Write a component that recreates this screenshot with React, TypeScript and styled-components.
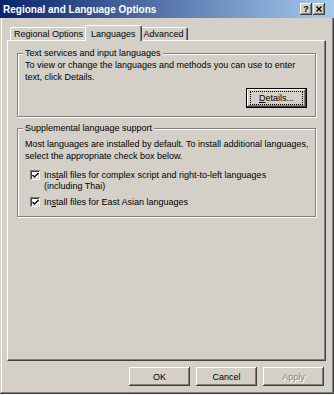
import styled, { createGlobalStyle, css } from "styled-components";

const face = "#d4d0c8";

const GlobalStyle = createGlobalStyle`
    html, body {
        margin: 0;
        padding: 0;
        background: #ffffff;
    }
    body {
        font-family: "Liberation Sans", Arial, sans-serif;
        font-size: 9px;
        color: #000000;
    }
`;

const raised = css`
    background: ${face};
    box-shadow: inset -1px -1px #404040, inset 1px 1px #ffffff,
        inset -2px -2px #808080, inset 2px 2px ${face};
`;

const Window = styled.div`
    width: 334px;
    height: 394px;
    box-sizing: border-box;
    display: flex;
    flex-direction: column;
    background: ${face};
    box-shadow: inset -1px -1px #404040, inset 1px 1px ${face},
        inset -2px -2px #808080, inset 2px 2px #ffffff;
`;

const TitleBar = styled.div`
    height: 18px;
    display: flex;
    align-items: center;
    padding: 0 9px 0 3px;
    background: linear-gradient(to right, #0a246a, #a6caf0);
`;

const Title = styled.span`
    flex: 1;
    color: #ffffff;
    font-weight: bold;
    font-size: 10px;
`;

const CaptionButton = styled.button`
    ${raised};
    width: 12px;
    height: 12px;
    margin-left: 1px;
    padding: 0;
    border: none;
    display: flex;
    align-items: center;
    justify-content: center;
    font-family: "Liberation Sans", Arial, sans-serif;
    font-weight: bold;
    font-size: 9px;
    line-height: 1;
    color: #000000;
`;

const Body = styled.div`
    flex: 1;
    display: flex;
    flex-direction: column;
    padding: 7px 8px 0 7px;
`;

const TabRow = styled.div`
    height: 15px;
    display: flex;
    align-items: flex-end;
    padding-left: 3px;
    position: relative;
    z-index: 1;
`;

const Tab = styled.div<{ $active?: boolean }>`
    height: ${(p) => (p.$active ? 16 : 13)}px;
    box-sizing: border-box;
    display: flex;
    align-items: center;
    padding: 0 ${(p) => (p.$active ? 5 : 3)}px;
    margin: 0 ${(p) => (p.$active ? -2 : 0)}px ${(p) => (p.$active ? -1 : 0)}px;
    background: ${face};
    border-top: 1px solid #ffffff;
    border-left: 1px solid #ffffff;
    border-right: 1px solid #404040;
    border-radius: 2px 2px 0 0;
    box-shadow: inset -1px 0 #808080;
    position: relative;
    z-index: ${(p) => (p.$active ? 2 : 0)};
`;

const Panel = styled.div`
    height: 321px;
    box-sizing: border-box;
    padding: 7px 9px 0 9px;
    border-top: 1px solid #ffffff;
    border-left: 1px solid #ffffff;
    border-right: 1px solid #404040;
    border-bottom: 1px solid #404040;
    box-shadow: inset -1px -1px #808080;
`;

const Group = styled.fieldset<{ $gap?: number }>`
    margin: ${(p) => p.$gap ?? 0}px 0 0 0;
    padding: 0 8px 8px 7px;
    min-width: 0;
    border: 1px solid #808080;
    box-shadow: 1px 1px #ffffff, inset 1px 1px #ffffff;
`;

const Legend = styled.legend`
    padding: 0 2px;
    margin-left: -2px;
    line-height: 11px;
    background: ${face};
`;

const Description = styled.p<{ $top?: number }>`
    margin: ${(p) => p.$top ?? 0}px -6px 0 0;
    line-height: 12px;
`;

const RightRow = styled.div`
    display: flex;
    justify-content: flex-end;
    margin-top: 5px;
`;

const PushButton = styled.button<{ $focused?: boolean; $disabled?: boolean }>`
    ${raised};
    width: 61px;
    height: ${(p) => (p.$focused ? 20 : 19)}px;
    padding: 0;
    border: ${(p) => (p.$focused ? "1px solid #000000" : "none")};
    font-family: "Liberation Sans", Arial, sans-serif;
    font-size: 9px;
    color: ${(p) => (p.$disabled ? "#808080" : "#000000")};
    text-shadow: ${(p) => (p.$disabled ? "1px 1px #ffffff" : "none")};
    display: flex;
    align-items: center;
    justify-content: center;
`;

const FocusRing = styled.span`
    display: flex;
    align-items: center;
    justify-content: center;
    width: 51px;
    height: 12px;
    outline: 1px dotted #000000;
`;

const CheckRow = styled.label<{ $top: number }>`
    display: flex;
    align-items: flex-start;
    margin: ${(p) => p.$top}px 0 0 5px;
    line-height: 11px;
`;

const CheckBox = styled.span`
    flex: none;
    width: 10px;
    height: 10px;
    margin: 0 4px 0 0;
    box-sizing: border-box;
    background: #ffffff;
    box-shadow: inset 1px 1px #808080, inset -1px -1px #ffffff,
        inset 2px 2px #404040, inset -2px -2px ${face};
    display: flex;
    align-items: center;
    justify-content: center;
`;

const Footer = styled.div`
    display: flex;
    justify-content: flex-end;
    gap: 6px;
    margin: 6px 2px 0 0;
`;

function Check() {
    return (
        <CheckBox>
            <svg width="7" height="7" viewBox="0 0 7 7">
                <path d="M0.5 3 L2.5 5 L6.5 1" stroke="#000" strokeWidth="1.4" fill="none" />
            </svg>
        </CheckBox>
    );
}

export default function App() {
    return (
        <>
            <GlobalStyle />
            <Window>
                <TitleBar>
                    <Title>Regional and Language Options</Title>
                    <CaptionButton>?</CaptionButton>
                    <CaptionButton>
                        <svg width="6" height="6" viewBox="0 0 6 6">
                            <path d="M0.5 0.5 L5.5 5.5 M5.5 0.5 L0.5 5.5" stroke="#000" strokeWidth="1.4" />
                        </svg>
                    </CaptionButton>
                </TitleBar>
                <Body>
                    <TabRow>
                        <Tab>Regional Options</Tab>
                        <Tab $active>Languages</Tab>
                        <Tab>Advanced</Tab>
                    </TabRow>
                    <Panel>
                        <Group>
                            <Legend>Text services and input languages</Legend>
                            <Description>
                                To view or change the languages and methods you can use to enter
                                text, click Details.
                            </Description>
                            <RightRow>
                                <PushButton $focused>
                                    <FocusRing>
                                        <u>D</u>etails...
                                    </FocusRing>
                                </PushButton>
                            </RightRow>
                        </Group>
                        <Group $gap={6}>
                            <Legend>Supplemental language support</Legend>
                            <Description $top={4}>
                                Most languages are installed by default. To install additional
                                languages, select the appropriate check box below.
                            </Description>
                            <CheckRow $top={8}>
                                <Check />
                                <span>
                                    Ins<u>t</u>all files for complex script and right-to-left
                                    languages (including Thai)
                                </span>
                            </CheckRow>
                            <CheckRow $top={5}>
                                <Check />
                                <span>
                                    In<u>s</u>tall files for East Asian languages
                                </span>
                            </CheckRow>
                        </Group>
                    </Panel>
                    <Footer>
                        <PushButton>OK</PushButton>
                        <PushButton>Cancel</PushButton>
                        <PushButton $disabled>Apply</PushButton>
                    </Footer>
                </Body>
            </Window>
        </>
    );
}
